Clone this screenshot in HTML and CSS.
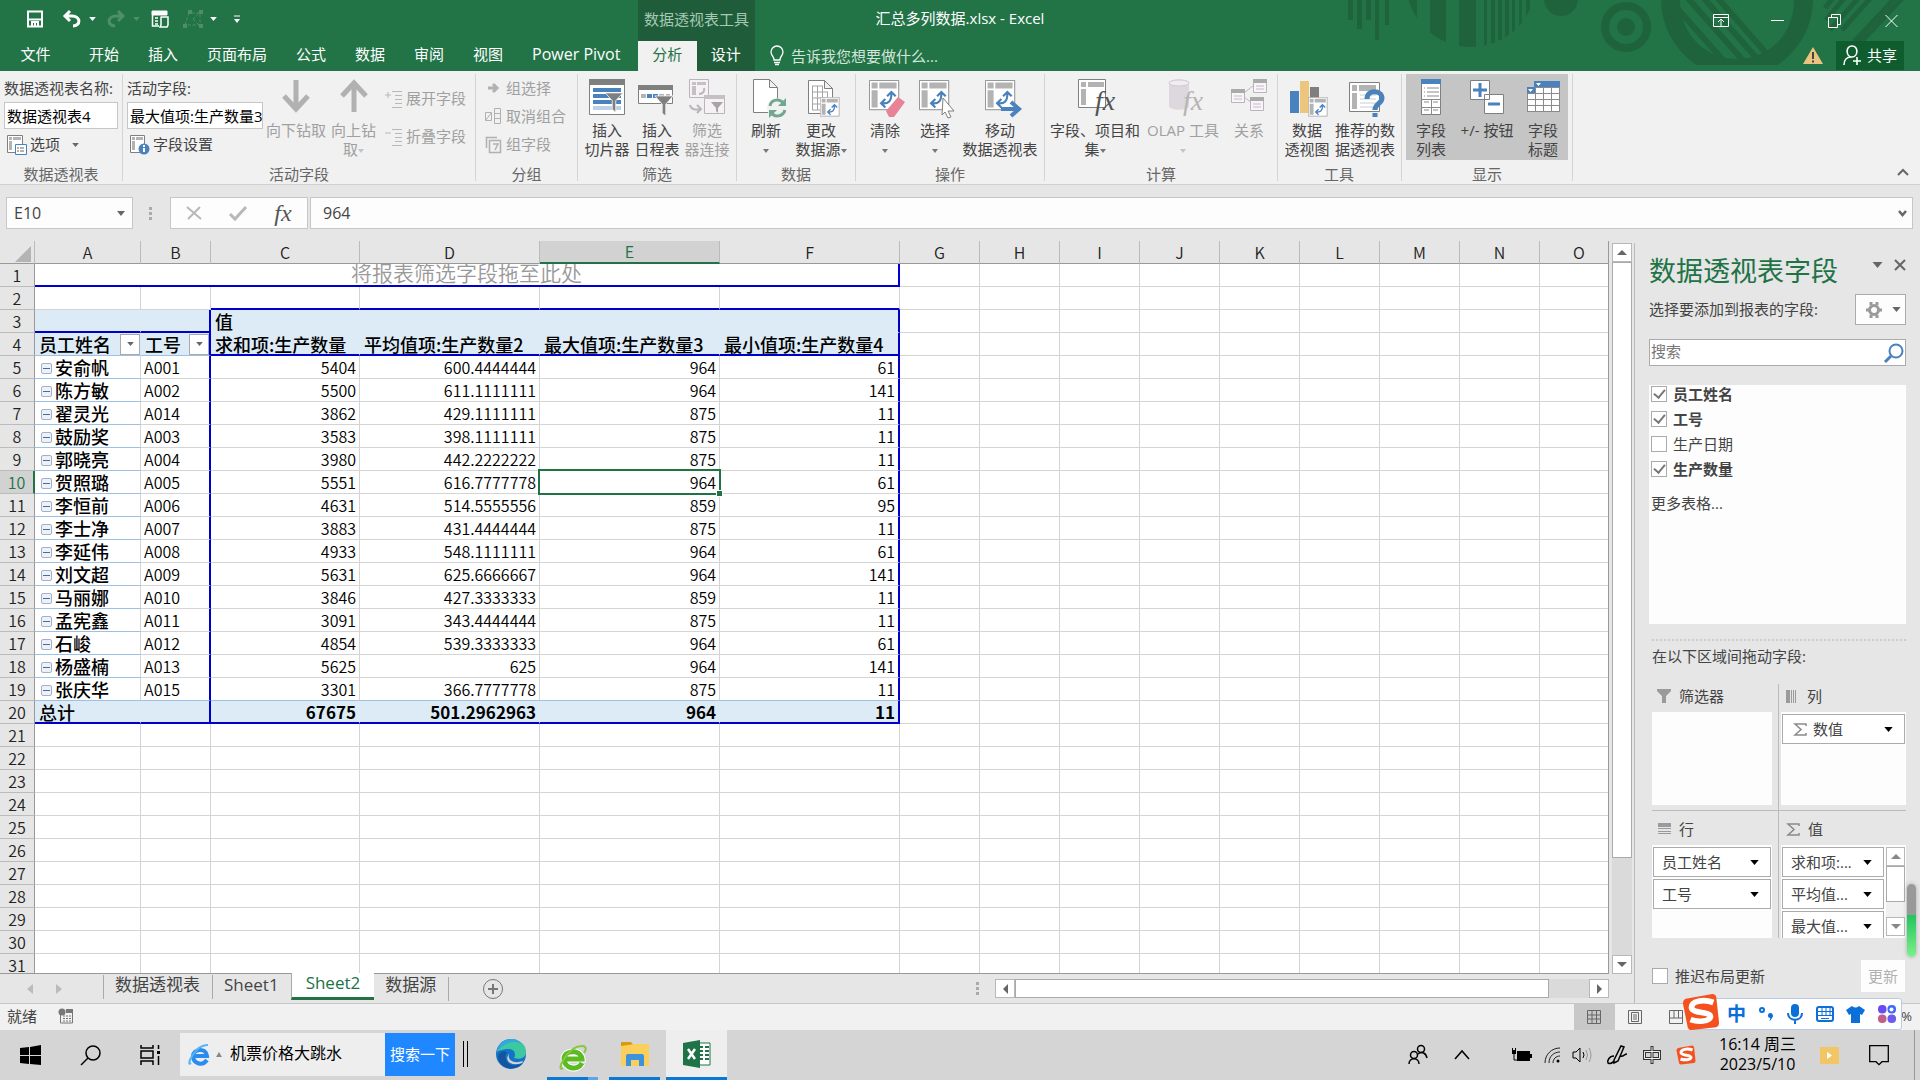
FILE: index.html
```html
<!DOCTYPE html>
<html lang="zh-CN">
<head>
<meta charset="utf-8">
<title>汇总多列数据.xlsx - Excel</title>
<link rel="stylesheet" href="styles.css">
</head>
<body>
<svg class="defs" aria-hidden="true">
  <symbol id="pivot" viewBox="0 0 36 36">
    <path d="M.5.5h34v34H.5z" fill="#fff" stroke="#7f7f7f"/>
    <path d="M3 3h7v7H3zM12 3h20v7H12zM3 12h7v20H3z" fill="#b3b3b3"/>
    <path d="M15 27c8 1 11-3 11-11M21 19l5-5 5 5M19 22l-5 5 5 5" fill="none" stroke="#4a82bd" stroke-width="2.500"/>
  </symbol>
  <symbol id="funnel" viewBox="0 0 22 24">
    <path d="M1 1h20l-8 9v13l-4-3V10z" fill="#7f7f7f" stroke="#f1f1f1"/>
  </symbol>
  <symbol id="tri-down" viewBox="0 0 10 6"><path d="M0 0h10L5 6z" fill="currentColor"/></symbol>
  <symbol id="sogou" viewBox="0 0 40 40">
    <path d="M4 6 32 1q3 0 4 3l3 27q0 4-3 5L10 39q-3 0-4-3L1 11q0-4 3-5z" fill="#f4511e"/>
    <path d="M33 10C22 6 10 9 10 15c0 7 20 4 20 10-1 5-13 6-21 3" fill="none" stroke="#fff" stroke-width="6"/>
  </symbol>
</svg>

<div class="app">
  <header class="top">
    <svg class="pattern" viewBox="0 0 590 71" width="590" height="71" aria-hidden="true">
      <defs>
        <clipPath id="c1"><circle cx="141" cy="-18" r="65"/></clipPath>
        <clipPath id="c2"><circle cx="407" cy="2" r="58"/></clipPath>
      </defs>
      <g fill="#1f633c">
        <path d="M18 0h5v20h-5zM27 0h5v29h-5zM36 0h5v20h-5zM45 0h4v40h-4zM55 0h4v25h-4z"/>
        <g clip-path="url(#c1)"><path d="M76 0h11v60H76zM100 0h16v60h-16zM129 0h17v60h-17zM154 0h3v60h-3zM161 0h4v60h-4zM168 0h4v60h-4zM175 0h4v60h-4zM182 0h3v60h-3zM189 0h3v60h-3zM196 0h4v60h-4z"/></g>
        <circle cx="231" cy="-1" r="17"/>
        <circle cx="296" cy="27" r="9"/>
      </g>
      <circle cx="296" cy="27" r="21" fill="none" stroke="#1f633c" stroke-width="8"/>
      <path d="M331 0q1 40 35 65h82q34-25 35-65h-19c0 35-26 59-57 59s-57-24-57-59z" fill="#1f633c"/>
      <g clip-path="url(#c2)" stroke="#1f633c" stroke-width="6">
        <path d="M340 0 400 68M356-4 416 64M370-6 430 62M384-6 444 62" />
      </g>
      <path d="m495 8 8-10m-7 22 20-24m-16 34 32-36m-20 36 32-36m-20 48 56-60m-66 78 66-70" stroke="#1f633c" stroke-width="5" fill="none"/>
    </svg>
    <div class="titlebar">
      <div class="title-left">
        <div class="qat">
          <button class="ib" aria-label="保存"><svg width="18" height="18" viewBox="0 0 18 18"><path d="M2 1.500h14v15H2zM2 9.500h14M6 16v-4h6v4M9 13v3" fill="none" stroke="#fff" stroke-width="2"/></svg></button>
          <button class="ib undo" aria-label="撤消"><svg width="18" height="18" viewBox="0 0 18 18"><path d="M7 1 2 6l5 5M2 6h7c9 0 9 10 1 10" fill="none" stroke="#fff" stroke-width="3"/></svg><svg class="car" width="7" height="4"><use href="#tri-down"/></svg></button>
          <button class="ib redo" aria-label="恢复"><svg width="18" height="18" viewBox="0 0 18 18"><path d="m11 1 5 5-5 5M16 6H9c-9 0-9 10-1 10" fill="none" stroke="#4f8f68" stroke-width="3"/></svg><svg class="car" width="7" height="4"><use href="#tri-down"/></svg></button>
          <button class="ib report" aria-label="数据透视表"><svg width="18" height="18" viewBox="0 0 18 18"><path d="M1 1h15v4H1z" fill="#fff" stroke="#fff"/><path d="M1.500 5v11H8M4 8h3M4 11h3M4 14h3M9.500 7H17v8l-1 2H9l1-2V7" fill="none" stroke="#fff" stroke-width="1.500"/></svg></button>
          <button class="ib shapes" aria-label="选择对象"><svg width="20" height="18" viewBox="0 0 20 18"><path d="M2 15 6 3h11v12zM10 9l5-5m-5 5 6 6" fill="none" stroke="#4f8f68" stroke-dasharray="3 2"/><path d="M0 14h4v4H0zM16 14h4v4h-4zM16 0h4v4h-4zM5 0h4v4H5z" fill="#4f8f68"/></svg><svg class="car" width="7" height="4"><use href="#tri-down"/></svg></button>
          <button class="ib more" aria-label="自定义"><svg width="8" height="9" viewBox="0 0 8 9"><path d="M1 1h6" stroke="#fff"/><path d="M1 4h6L4 8z" fill="#fff"/></svg></button>
        </div>
        <div class="context">数据透视表工具</div>
      </div>
      <h1>汇总多列数据.xlsx - Excel</h1>
      <div class="winbtns">
        <button aria-label="功能区显示选项"><svg width="16" height="14" viewBox="0 0 16 14"><path d="M.5.5h15v12H.5zM.5 3.500h15M8 12V6M5 8l3-3 3 3" fill="none" stroke="#fff"/></svg></button>
        <button aria-label="最小化"><svg width="13" height="14" viewBox="0 0 13 14"><path d="M0 6.500h13" stroke="#fff"/></svg></button>
        <button aria-label="还原"><svg width="13" height="14" viewBox="0 0 13 14"><path d="M.5 3.500h9v10h-9zM3.500 3V.5h9v10H10" fill="none" stroke="#fff"/></svg></button>
        <button aria-label="关闭"><svg width="13" height="14" viewBox="0 0 13 14"><path d="m.5 1 12 12m0-12-12 12" stroke="#fff"/></svg></button>
      </div>
    </div>
    <nav class="tabs">
      <button class="file">文件</button>
      <div class="tablist">
        <button>开始</button><button>插入</button><button>页面布局</button><button>公式</button><button>数据</button><button>审阅</button><button>视图</button><button class="latin">Power Pivot</button>
      </div>
      <div class="ctx-tabs"><button class="on">分析</button><button>设计</button></div>
      <button class="tell"><svg width="14" height="20" viewBox="0 0 14 20"><path d="M4 14C4 10 1 10 1 6a6 6 0 0 1 12 0c0 4-3 4-3 8zM4 16.500h6M5 18.500h4" fill="none" stroke="#fff" stroke-width="1.300"/></svg>告诉我您想要做什么...</button>
      <svg class="warn" width="20" height="18" viewBox="0 0 20 18"><path d="M10 0 20 17H0z" fill="#edc380"/><path d="M10 5v7M10 13.500v2" stroke="#444" stroke-width="2"/></svg>
      <button class="share"><svg width="20" height="21" viewBox="0 0 20 21"><path d="M1 20c0-5 3-8 7-8M9 1c7 0 6 11 0 11S2 1 9 1M14 12v8M10 16h8" fill="none" stroke="#fff" stroke-width="1.600"/></svg>共享</button>
    </nav>
  </header>

  <section class="ribbon">
    <div class="group g-name">
      <div class="body col">
        <label for="pt-name">数据透视表名称:</label>
        <input id="pt-name" type="text" value="数据透视表4">
        <button class="row-btn"><svg width="20" height="20" viewBox="0 0 20 20"><path d="M.5.500h15v17H.5z" fill="#fff" stroke="#7f7f7f"/><path d="M2 2h3v3H2zM6 2h8v3H6zM2 6h3v9H2z" fill="#b3b3b3"/><path d="M8.500 9.500h11v10h-11z" fill="#fff" stroke="#4a82bd"/><path d="M10 13h2m1 0h4m-7 3h2m1 0h4" stroke="#666"/></svg>选项<svg class="car" width="7" height="4"><use href="#tri-down"/></svg></button>
      </div>
      <div class="caption">数据透视表</div>
    </div>
    <div class="group g-field">
      <div class="body">
        <div class="col">
          <label for="act-field">活动字段:</label>
          <input id="act-field" type="text" value="最大值项:生产数量3">
          <button class="row-btn"><svg width="20" height="20" viewBox="0 0 20 20"><path d="M.5.500h14v17H.5z" fill="#fff" stroke="#7f7f7f"/><path d="M2 2h3v3H2zM6 2h7v3H6zM2 6h3v9H2z" fill="#b3b3b3"/><circle cx="14" cy="14" r="5.500" fill="#4a82bd"/><path d="M14 13v4M14 10v2" stroke="#fff" stroke-width="2"/></svg>字段设置</button>
        </div>
        <button class="big dis w60 drill"><svg width="28" height="34" viewBox="0 0 28 34"><path d="M14 1v30M2 17l12 13 12-13" fill="none" stroke="#b1b1b1" stroke-width="5"/></svg><span>向下钻取</span></button>
        <button class="big dis w55"><svg width="28" height="34" viewBox="0 0 28 34"><path d="M14 33V4M2 17 14 4l12 13" fill="none" stroke="#b1b1b1" stroke-width="5"/></svg><span>向上钻<br>取<i class="dd"></i></span></button>
        <div class="col two">
          <button class="row-btn dis"><svg width="18" height="18" viewBox="0 0 18 18"><path d="M0 5h6M3 2v6M7 1.500h10M10 5.500h7M10 9.500h7M10 13.500h7M7 17.500h10" stroke="#b8b8b8"/></svg>展开字段</button>
          <button class="row-btn dis"><svg width="18" height="18" viewBox="0 0 18 18"><path d="M0 5h6M7 1.500h10M10 5.500h7M10 9.500h7M10 13.500h7M7 17.500h10" stroke="#b8b8b8"/></svg>折叠字段</button>
        </div>
      </div>
      <div class="caption">活动字段</div>
    </div>
    <div class="group g-grp">
      <div class="body col">
        <button class="row-btn dis"><svg width="17" height="17" viewBox="0 0 17 17"><path d="M3 8h9M8 4l4 4-4 4" fill="none" stroke="#b1b1b1" stroke-width="3"/></svg>组选择</button>
        <button class="row-btn dis"><svg width="17" height="17" viewBox="0 0 17 17"><path d="M.500 4.500h6v8h-6zM.500 12.500 6.500 4.500M9.500.500h6v15h-6zM9.500 5.500h6M9.500 10.500h6" fill="none" stroke="#b1b1b1"/></svg>取消组合</button>
        <button class="row-btn dis"><svg width="17" height="17" viewBox="0 0 17 17"><path d="M1.500 12V1.500H12M4.500 4.500h11v12h-11zM8 8h5l-3 6" fill="none" stroke="#b1b1b1" stroke-width="1.500"/></svg>组字段</button>
      </div>
      <div class="caption">分组</div>
    </div>
    <div class="group">
      <div class="body">
        <button class="big w50"><svg width="36" height="36" viewBox="0 0 36 36"><path d="M.500.500h35v35H.500z" fill="#fff" stroke="#7f7f7f"/><path d="M0 0h36v6H0z" fill="#7f7f7f"/><path d="M4 9h28v4H4zM4 15h28v4H4zM4 21h28v4H4z" fill="#4a82bd"/><path d="M4 27h28v4H4z" fill="#bdd0e6"/><use href="#funnel" x="14" y="13" width="22" height="21"/></svg><span>插入<br>切片器</span></button>
        <button class="big w50"><svg width="38" height="36" viewBox="0 0 38 36"><path d="M.500 6.500h34v18H.500z" fill="#fff" stroke="#7f7f7f"/><path d="M0 6h35v5H0z" fill="#7f7f7f"/><path d="M3 15h5v4H3zM21 15h5v4h-5zM28 15h4v4h-4z" fill="#b3b3b3"/><path d="M9 15h5v4H9zM15 15h5v4h-5z" fill="#4a82bd"/><use href="#funnel" x="14" y="16" width="24" height="22"/></svg><span>插入<br>日程表</span></button>
        <button class="big w50 dis"><svg width="36" height="36" viewBox="0 0 36 36"><g fill="#f4f2f4" stroke="#bbb5bb"><path d="M.500.500h19v18H.500zM15.500 16.500h20v18h-20z"/></g><path d="M3 3h4v3H3zM8 3h9v3H8zM3 7h4v9H3zM15 16h21v4H15z" fill="#c4c0c4"/><path d="M10 15c4 0 6-3 5-6M1 26c1 5 6 5 10 4M8 26l4 4-4 4" fill="none" stroke="#bbb5bb" stroke-width="2"/><path d="M22 23h12l-5 6v5l-2-2v-3z" fill="#a5a5a5"/></svg><span>筛选<br>器连接</span></button>
      </div>
      <div class="caption">筛选</div>
    </div>
    <div class="group">
      <div class="body">
        <button class="big w50"><svg width="26" height="38" viewBox="0 0 26 38"><path d="M.500.500h16l8 8v25h-24zM16.500.500v8h8" fill="#fff" stroke="#7f7f7f"/><circle cx="24" cy="29" r="10" fill="#f1f1f1"/><g fill="none" stroke="#70a892" stroke-width="3"><path d="M17 27c1-7 10-8 14-2M32 31c-2 7-11 8-14 2"/></g><path d="M33 19v8h-8zM16 39v-8h8z" fill="#70a892"/></svg><span>刷新<br><i class="dd"></i></span></button>
        <button class="big w60"><svg width="26" height="38" viewBox="0 0 26 38"><path d="M.500 1.500h16l8 8v25H.500zM16.500 1.500v8h8" fill="#fff" stroke="#7f7f7f"/><path d="M4 7h11M4 13h16M4 19h16M4 25h16M4 31h16M4.500 7v24M9.500 7v24M14.500 7v24M19.500 13v18" stroke="#a5a5a5"/><use href="#pivot" x="12" y="18" width="20" height="20"/></svg><span>更改<br>数据源<i class="dd"></i></span></button>
      </div>
      <div class="caption">数据</div>
    </div>
    <div class="group">
      <div class="body">
        <button class="big w50"><svg width="32" height="38" viewBox="0 0 32 38"><use href="#pivot" x="0" y="1" width="31" height="31"/><path d="m17 32 12-14 7 5-11 15h-5z" fill="#e68397"/></svg><span>清除<br><i class="dd"></i></span></button>
        <button class="big w50"><svg width="32" height="38" viewBox="0 0 32 38"><use href="#pivot" x="0" y="1" width="31" height="31"/><path d="m24 19 11 13h-6l3 6-3 1-3-6-3 3z" fill="#fff" stroke="#7f7f7f"/></svg><span>选择<br><i class="dd"></i></span></button>
        <button class="big w80"><svg width="30" height="38" viewBox="0 0 30 38"><use href="#pivot" x="0" y="1" width="31" height="31"/><path d="M16 30h17M26 23l8 7-8 7" fill="none" stroke="#4a82bd" stroke-width="4"/></svg><span>移动<br>数据透视表</span></button>
      </div>
      <div class="caption">操作</div>
    </div>
    <div class="group">
      <div class="body">
        <button class="big w92"><svg width="34" height="38" viewBox="0 0 34 38"><path d="M.500.500h27v28H.500z" fill="#fff" stroke="#7f7f7f"/><path d="M3 3h5v5H3zM10 3h16v5H10zM3 10h5v16H3z" fill="#b3b3b3"/><text x="17" y="31" class="fx-text">fx</text></svg><span>字段、项目和<br>集<i class="dd"></i></span></button>
        <button class="big w84 dis"><svg width="30" height="38" viewBox="0 0 30 38"><path d="M1 4v23c0 5 20 5 20 0V4c0-5-20-5-20 0" fill="#ddd8de"/><ellipse cx="11" cy="4" rx="10" ry="3" fill="#efedef" stroke="#d0ccd0"/><text x="15" y="31" class="fx-text pale">fx</text></svg><span>OLAP 工具<br><i class="dd"></i></span></button>
        <button class="big w48 dis"><svg width="36" height="36" viewBox="0 0 36 36"><path d="M13 14 23 6M13 18l8 6" stroke="#bbb"/><g fill="#f8f5f8" stroke="#bbb5bb"><path d="M.500 10.500h13v13H.500zM22.500.500h13v13h-13zM19.500 18.500h13v13h-13z"/></g><path d="M0 10h14v4H0zM22 0h14v4H22zM19 18h14v4H19z" fill="#aaa"/><path d="M3 17h8M3 20h8M25 7h8M25 10h8M22 25h8M22 28h8" stroke="#cbb8cf"/></svg><span>关系</span></button>
      </div>
      <div class="caption">计算</div>
    </div>
    <div class="group g-tool">
      <div class="body">
        <button class="big w52"><svg width="34" height="38" viewBox="0 0 34 38"><path d="M0 12h9v22H0z" fill="#4a82bd"/><path d="M10 2h9v32h-9z" fill="#ecc67d"/><path d="M20 8h9v12h-9z" fill="#7f7f7f"/><use href="#pivot" x="18" y="18" width="20" height="20"/></svg><span>数据<br>透视图</span></button>
        <button class="big w64"><svg width="32" height="38" viewBox="0 0 32 38"><path d="M.500 3.500h30v29H.500z" fill="#fff" stroke="#7f7f7f"/><path d="M3 6h5v6H3zM10 6h17v6H10zM3 14h5v16H3z" fill="#b3b3b3"/><path d="M11 16h16M11 20h16M11 24h16M11 28h16" stroke="#ccc"/><path d="M18 20c0-10 15-9 15-1 0 6-7 5-7 12M26 34v4" fill="none" stroke="#4a82bd" stroke-width="5"/></svg><span>推荐的数<br>据透视表</span></button>
      </div>
      <div class="caption">工具</div>
    </div>
    <div class="group">
      <div class="body pressed">
        <button class="big w50"><svg width="20" height="36" viewBox="0 0 20 36"><path d="M.500.500h19v35H.500z" fill="#fff" stroke="#7f7f7f"/><path d="M0 0h20v5H0z" fill="#4a82bd"/><path d="M3 9h1m2 0h12M3 13h1m2 0h12M3 17h1m2 0h12M0 20.500h20M0 28.500h20M10.500 20v16M3 23h5m4 0h5M3 31h5m4 0h5" stroke="#8a8a8a"/></svg><span>字段<br>列表</span></button>
        <button class="big w62"><svg width="36" height="36" viewBox="0 0 36 36"><path d="M1.500 1.500h19v19h-19zM15.500 15.500h19v19h-19z" fill="#fff" stroke="#7f7f7f"/><path d="M4 11h14M11 4v14M19 25h12" stroke="#4a82bd" stroke-width="3"/></svg><span>+/- 按钮</span></button>
        <button class="big w50"><svg width="34" height="36" viewBox="0 0 34 36"><path d="M8 2h26v31H1V8h7z" fill="#8a8a8a"/><path d="M8 2h26v6H8zM1 8h8v6H1z" fill="#4a82bd"/><path d="M10 9h7v5h-7zM18 9h7v5h-7zM26 9h7v5h-7zM2 15h7v5H2zM10 15h7v5h-7zM18 15h7v5h-7zM26 15h7v5h-7zM2 21h7v5H2zM10 21h7v5h-7zM18 21h7v5h-7zM26 21h7v5h-7zM2 27h7v5H2zM10 27h7v5h-7zM18 27h7v5h-7zM26 27h7v5h-7zM10 4h5l-2.500 3zM2 10h5l-2.500 3z" fill="#fff"/></svg><span>字段<br>标题</span></button>
      </div>
      <div class="caption">显示</div>
    </div>
    <button class="collapse" aria-label="折叠功能区"><svg width="12" height="8" viewBox="0 0 12 8"><path d="m1 7 5-5 5 5" fill="none" stroke="#666" stroke-width="2"/></svg></button>
  </section>

  <section class="formula">
    <div class="namebox"><input type="text" value="E10" aria-label="名称框"><svg width="8" height="5"><use href="#tri-down"/></svg></div>
    <span class="grip"></span>
    <div class="fbtns">
      <button aria-label="取消"><svg width="16" height="14" viewBox="0 0 16 14"><path d="m1 1 14 12M14 1 2 13" stroke="#b8b8b8" stroke-width="2"/></svg></button>
      <button aria-label="输入"><svg width="18" height="14" viewBox="0 0 18 14"><path d="m1 8 5 5L17 1" fill="none" stroke="#b8b8b8" stroke-width="3"/></svg></button>
      <button class="fx" aria-label="插入函数">fx</button>
    </div>
    <div class="fbox"><input type="text" value="964" aria-label="编辑栏"><svg width="9" height="7" viewBox="0 0 9 7"><path d="m1 1 3.500 4L8 1" fill="none" stroke="#666" stroke-width="2.500"/></svg></div>
  </section>

  <main class="work">
    <div class="book">
      <div class="sheet-row">
        <div class="sheet"><table class="grid" id="grid"></table></div>
        <div class="vscroll">
          <button aria-label="向上滚动"><svg width="10" height="5" viewBox="0 0 10 5"><path d="M0 5h10L5 0z" fill="#666"/></svg></button>
          <div class="track"><div class="thumb"></div></div>
          <button aria-label="向下滚动"><svg width="10" height="5" viewBox="0 0 10 5"><path d="M0 0h10L5 5z" fill="#666"/></svg></button>
        </div>
      </div>
      <div class="sheetbar">
        <div class="nav"><svg width="6" height="10" viewBox="0 0 6 10"><path d="M6 0v10L0 5z" fill="#bbb"/></svg><svg width="6" height="10" viewBox="0 0 6 10"><path d="M0 0v10l6-5z" fill="#bbb"/></svg></div>
        <button class="st">数据透视表</button>
        <button class="st">Sheet1</button>
        <button class="st on">Sheet2</button>
        <button class="st">数据源</button>
        <button class="add" aria-label="新工作表"><svg width="22" height="22" viewBox="0 0 22 22"><circle cx="11" cy="11" r="9.500" fill="none" stroke="#777"/><path d="M11 6v10M6 11h10" stroke="#777" stroke-width="2"/></svg></button>
        <div class="hscroll">
          <span class="grip"></span>
          <button aria-label="向左滚动"><svg width="5" height="10" viewBox="0 0 5 10"><path d="M5 0v10L0 5z" fill="#666"/></svg></button>
          <div class="track"><div class="thumb"></div></div>
          <button aria-label="向右滚动"><svg width="5" height="10" viewBox="0 0 5 10"><path d="M0 0v10l5-5z" fill="#666"/></svg></button>
        </div>
      </div>
    </div>

    <aside class="pane">
      <div class="pane-head">
        <h2>数据透视表字段</h2>
        <button aria-label="任务窗格选项"><svg width="11" height="6"><use href="#tri-down"/></svg></button>
        <button aria-label="关闭窗格"><svg width="12" height="12" viewBox="0 0 12 12"><path d="m1 1 10 10M11 1 1 11" stroke="#666" stroke-width="2"/></svg></button>
      </div>
      <div class="pane-sub">
        <span>选择要添加到报表的字段:</span>
        <button class="gear" aria-label="工具"><svg width="16" height="16" viewBox="0 0 16 16"><circle cx="8" cy="8" r="4.500" fill="none" stroke="#9a9a9a" stroke-width="3"/><path d="M5 0v3M11 0v3M5 13v3M11 13v3M0 8h3M13 8h3" stroke="#9a9a9a" stroke-width="3"/></svg><svg width="9" height="5"><use href="#tri-down"/></svg></button>
      </div>
      <div class="search"><input type="text" placeholder="搜索" aria-label="搜索字段"><svg width="20" height="20" viewBox="0 0 20 20"><circle cx="12" cy="8" r="6.500" fill="none" stroke="#4a82bd" stroke-width="2"/><path d="m7 13-6 6" stroke="#4a82bd" stroke-width="3"/></svg></div>
      <div class="fields">
        <label class="b"><input type="checkbox" checked>员工姓名</label>
        <label class="b"><input type="checkbox" checked>工号</label>
        <label><input type="checkbox">生产日期</label>
        <label class="b"><input type="checkbox" checked>生产数量</label>
        <a href="#">更多表格...</a>
      </div>
      <div class="areas-title">在以下区域间拖动字段:</div>
      <div class="areas">
        <div class="area">
          <h3><svg width="14" height="14" viewBox="0 0 14 14"><path d="M0 0h14v2L9 7v7H5V7L0 2z" fill="#9a9a9a"/></svg>筛选器</h3>
          <div class="drop"></div>
        </div>
        <div class="area right">
          <h3><svg width="13" height="13" viewBox="0 0 13 13"><path d="M0 0h4v13H0zM5 0h1v13H5zM7 0h1v13H7zM9 0h1v13H9z" fill="#9a9a9a"/></svg>列</h3>
          <div class="drop"><button class="pill"><span><svg class="sig" width="13" height="13" viewBox="0 0 13 13"><path d="M12 3V1H1l6 5.500L1 12h11v-2" fill="none" stroke="#8a8a8a" stroke-width="1.500"/></svg>数值</span><svg width="9" height="5"><use href="#tri-down"/></svg></button></div>
        </div>
        <div class="area low">
          <h3><svg width="13" height="12" viewBox="0 0 13 12"><path d="M0 0h13v4H0zM0 5h13v1H0zM0 8h13v1H0zM0 10h13v1H0z" fill="#9a9a9a"/></svg>行</h3>
          <div class="drop">
            <button class="pill"><span>员工姓名</span><svg width="9" height="5"><use href="#tri-down"/></svg></button>
            <button class="pill"><span>工号</span><svg width="9" height="5"><use href="#tri-down"/></svg></button>
          </div>
        </div>
        <div class="area right low">
          <h3><svg width="13" height="13" viewBox="0 0 13 13"><path d="M12 3V1H1l6 5.500L1 12h11v-2" fill="none" stroke="#8a8a8a" stroke-width="1.500"/></svg>值</h3>
          <div class="drop split">
            <div class="pills">
              <button class="pill"><span>求和项:...</span><svg width="9" height="5"><use href="#tri-down"/></svg></button>
              <button class="pill"><span>平均值...</span><svg width="9" height="5"><use href="#tri-down"/></svg></button>
              <button class="pill"><span>最大值...</span><svg width="9" height="5"><use href="#tri-down"/></svg></button>
            </div>
            <div class="vscroll mini">
              <button aria-label="上移"><svg width="10" height="5" viewBox="0 0 10 5"><path d="M0 5h10L5 0z" fill="#888"/></svg></button>
              <div class="track"><div class="thumb"></div></div>
              <button aria-label="下移"><svg width="10" height="5" viewBox="0 0 10 5"><path d="M0 0h10L5 5z" fill="#888"/></svg></button>
            </div>
          </div>
        </div>
      </div>
      <div class="defer"><label><input type="checkbox">推迟布局更新</label><button disabled>更新</button></div>
      <div class="meter"></div>
    </aside>
  </main>

  <footer class="status">
    <span>就绪</span>
    <svg width="16" height="16" viewBox="0 0 16 16"><path d="M2.500 5v10h12V4" fill="none" stroke="#777"/><path d="M8 1h7v4H8z" fill="#777"/><circle cx="4" cy="4" r="3.500" fill="#777"/><path d="M5 8h8M5 10.500h8M5 13h8" stroke="#777" stroke-dasharray="2 1"/></svg>
    <div class="views">
      <button class="on" aria-label="普通"><svg width="15" height="14" viewBox="0 0 15 14"><path d="M.500.500h13v13H.500zM5 0v14M9.500 0v14M0 5h14M0 9h14" fill="none" stroke="#666"/></svg></button>
      <button aria-label="页面布局"><svg width="15" height="14" viewBox="0 0 15 14"><path d="M.500.500h13v13H.500zM3.500 2.500h7v9h-7zM5 5h4M5 7h4M5 9h4" fill="none" stroke="#666"/></svg></button>
      <button aria-label="分页预览"><svg width="15" height="14" viewBox="0 0 15 14"><path d="M.500.500h13v13H.500zM5 0v8h9M9.500 0v8M0 8h5" fill="none" stroke="#666"/></svg></button>
    </div>
    <span class="pct">%</span>
    <div class="ime">
      <svg class="ime-logo" width="40" height="38"><use href="#sogou"/></svg>
      <b>中</b>
      <svg width="16" height="20" viewBox="0 0 16 20"><circle cx="3" cy="6" r="2" fill="none" stroke="#0a6fd8" stroke-width="2"/><path d="M12 9a3 3 0 0 1 1 5q-1 3-3 3 2-2 1-3a2.500 2.500 0 0 1 1-5" fill="#0a6fd8"/></svg>
      <svg width="16" height="20" viewBox="0 0 16 20"><rect x="4" width="8" height="13" rx="4" fill="#0a6fd8"/><path d="M1 9c0 9 14 9 14 0M8 15v5" fill="none" stroke="#0a6fd8" stroke-width="2"/></svg>
      <svg width="18" height="16" viewBox="0 0 18 16"><rect x="1" y="1" width="16" height="14" rx="2" fill="none" stroke="#0a6fd8" stroke-width="2"/><path d="M2 5.500h14M2 9.500h14M6 2v8M10 2v8M14 2v8M5 12.500h8" stroke="#0a6fd8"/></svg>
      <svg width="19" height="18" viewBox="0 0 19 18"><path d="M6 1q3.500 3 7 0l6 4-3 5-2-1v9H5V9l-2 1-3-5z" fill="#0a6fd8"/></svg>
      <svg width="18" height="18" viewBox="0 0 18 18"><rect width="8.500" height="8.500" rx="4" fill="#6a4cf0"/><rect x="9.500" width="8.500" height="8.500" rx="4" fill="#3d6bf5"/><rect y="9.500" width="8.500" height="8.500" rx="4" fill="#c0608a"/><rect x="9.500" y="9.500" width="8.500" height="8.500" rx="4" fill="#6a5cf0"/><circle cx="13.500" cy="4.500" r="2" fill="#fff"/></svg>
    </div>
  </footer>

  <div class="taskbar">
    <button class="tk" aria-label="开始"><svg width="21" height="20" viewBox="0 0 21 20"><path d="m0 3 9-1v8H0zM10 2l11-2v10H10zM0 11h9v8l-9-1zM10 11h11v9l-11-1z"/></svg></button>
    <button class="tk" aria-label="搜索"><svg width="21" height="21" viewBox="0 0 21 21"><circle cx="13" cy="8" r="7" fill="none" stroke="#000" stroke-width="1.500"/><path d="m8 13-7 7" stroke="#000" stroke-width="1.500"/></svg></button>
    <button class="tk" aria-label="任务视图"><svg width="21" height="20" viewBox="0 0 21 20"><path d="M1 0v3h12V0M1 6h12v7H1zM1 20v-4h12v4M18.500 0v4M18.500 11v9" fill="none" stroke="#000" stroke-width="1.500"/><path d="M17 6h3v3h-3z"/></svg></button>
    <div class="tsearch">
      <svg width="24" height="24" viewBox="0 0 24 24"><path d="M19 17c-5 7-14 3-14-4S18 4 19 13H6" fill="none" stroke="#2b8cf0" stroke-width="4"/><path d="M3 20C-3 25 7 1 20 2" fill="none" stroke="#57b3f7" stroke-width="2"/></svg>
      <svg width="6" height="5" viewBox="0 0 6 5"><path d="M0 5h6L3 0z" fill="#888"/></svg>
      <input type="text" value="机票价格大跳水" aria-label="网页搜索">
      <button>搜索一下</button>
    </div>
    <span class="bars"></span>
    <button class="app-btn" aria-label="Edge"><svg width="32" height="32" viewBox="0 0 32 32"><circle cx="16" cy="16" r="15" fill="#1473c8"/><path d="M2 14C4-3 31-2 31 14c0 6-6 8-12 6 3-5-1-9-5-9-6 0-11 2-12 3" fill="#3cc8a0"/><path d="M2 14C4-1 22-2 26 6c-9-5-18 0-24 8" fill="#33a7e0"/><path d="M12 14c-5 8 3 18 16 11-5 8-24 8-25-6 0-4 5-7 9-5" fill="#1555a0"/><path d="M14 16c-2 7 6 10 14 7l-1 2c-12 4-18-3-13-9" fill="#d4d4d4"/></svg></button>
    <button class="app-btn run two" aria-label="浏览器"><svg width="30" height="30" viewBox="0 0 30 30"><path d="M24 20c-5 9-18 5-18-4S23 6 24 16H8" fill="none" stroke="#fff" stroke-width="7"/><path d="M24 20c-5 9-18 5-18-4S23 6 24 16H8" fill="none" stroke="#5cba22" stroke-width="5"/><path d="M5 25C-3 31 9 2 25 3c4 1 3 4 1 7" fill="none" stroke="#86c840" stroke-width="2"/></svg></button>
    <button class="app-btn run" aria-label="文件资源管理器"><svg width="28" height="26" viewBox="0 0 28 26"><path d="M0 1h10l3 4H0z" fill="#d99a0b"/><path d="M0 5 14 3h14v22H0z" fill="#fbcf5c"/><path d="M5 25V15q0-2 2-2h14q2 0 2 2v10h-5v-6h-8v6z" fill="#3a93dc"/></svg></button>
    <button class="app-btn run active" aria-label="Excel"><svg width="28" height="28" viewBox="0 0 28 28"><path d="M14 3h13v22H14z" fill="#fff" stroke="#207346"/><path d="M17 7h3m2 0h4M17 11h3m2 0h4M17 15h3m2 0h4M17 19h3m2 0h4" stroke="#207346" stroke-width="2"/><path d="m0 3 17-3v28L0 25z" fill="#207346"/><path d="m5 9 7 10M12 9 5 19" stroke="#fff" stroke-width="2.500"/></svg></button>
    <div class="tray">
      <svg width="20" height="20" viewBox="0 0 20 20"><g fill="none" stroke="#000" stroke-width="1.500"><circle cx="13" cy="4" r="3.500"/><circle cx="6" cy="10" r="3.500"/><path d="M1 19c0-7 10-7 10 0M10 9c4-3 8-1 9 4"/></g></svg>
      <svg width="16" height="10" viewBox="0 0 16 10"><path d="m1 9 7-8 7 8" fill="none" stroke="#000" stroke-width="1.500"/></svg>
      <svg width="20" height="14" viewBox="0 0 20 14"><path d="M5 3h13v10H5zM18 6h2v4h-2zM0 2h4v4H0z"/><path d="M.500 0v3M3.500 0v3M2 5v7h4" fill="none" stroke="#000"/></svg>
      <svg width="17" height="17" viewBox="0 0 17 17"><g fill="none" stroke="#222"><path d="M1 16C1 7 8 1 16 1M5 16C5 9 10 5 16 5M9 16c0-4 3-7 7-7"/></g><circle cx="14" cy="14" r="1.500"/></svg>
      <svg width="20" height="16" viewBox="0 0 20 16"><path d="M1 5h3l4-4v14l-4-4H1z" fill="none" stroke="#000"/><path d="M11 5q2 3 0 6" fill="none" stroke="#000"/><path d="M14 3q3 5 0 10M17 1q4 7 0 14" fill="none" stroke="#999"/></svg>
      <svg width="21" height="20" viewBox="0 0 21 20"><path d="M7 15 14 1l3 1-6 14-4 2zM7 11c-5 0-7 5-6 7 4 2 7-3 6-4M13 11c4 1 4-2 7-2" fill="none" stroke="#000" stroke-width="1.500"/></svg>
      <svg width="18" height="18" viewBox="0 0 18 18"><path d="M1.500 5.500h15v7h-15zM9 0v18" fill="none" stroke="#333" stroke-width="3"/><path d="M1.500 5.500h15v7h-15zM9 1v16" fill="none" stroke="#eee"/></svg>
      <svg width="20" height="20"><use href="#sogou"/></svg>
      <div class="clock">16:14 周三<br>2023/5/10</div>
      <svg class="play" width="19" height="17" viewBox="0 0 19 17"><path d="M0 0h19v17H0z" fill="#f2c664"/><path d="m7 5 5 3.500L7 12z" fill="#fff"/></svg>
      <svg width="20" height="20" viewBox="0 0 20 20"><path d="M.700.700h18.600v16H13l-3 3-3-3H.700z" fill="none" stroke="#000" stroke-width="1.300"/></svg>
    </div>
  </div>
</div>
<script src="grid.js"></script>
</body>
</html>
```
FILE: styles.css
```css
* { box-sizing: border-box; }
body {
  margin: 0;
  font: 15px/19px "Open Sans", "Noto Sans CJK SC", sans-serif;
  color: #444;
  background: #e6e6e6;
}
button, input { font: inherit; color: inherit; }
button { border: 0; background: none; padding: 0; }
input { border: 0; padding: 0; min-width: 0; outline: 0; background: none; }
h1, h2, h3 { margin: 0; font-weight: 400; }
svg { display: block; flex: none; overflow: visible; }
.defs { position: absolute; width: 0; height: 0; }
.app { display: flex; flex-direction: column; height: 100vh; overflow: hidden; }

/* title bar and tabs */
.top { position: relative; background: #227447; color: #fff; flex: none; }
.pattern { position: absolute; right: 0; top: 0; overflow: hidden; }
.titlebar { position: relative; display: grid; grid-template-columns: 1fr auto 1fr; height: 41px; }
.title-left { display: flex; }
.qat { display: flex; align-items: center; width: 638px; padding: 0 0 3px 26px; }
.ib { display: flex; align-items: center; gap: 8px; }
.ib .car { color: #fff; }
.undo { margin-left: 19px; }
.redo { margin-left: 11px; }
.redo .car { color: #4f8f68; }
.report { margin-left: 11px; }
.shapes { margin-left: 14px; gap: 7px; }
.more { margin-left: 16px; }
.context { width: 117px; background: #1e5c3a; color: #a6c9b4; text-align: center; line-height: 38px; }
h1 { font-size: 15px; line-height: 37px; }
.winbtns { display: flex; justify-content: flex-end; align-items: center; }
.winbtns button { width: 57px; height: 38px; display: grid; place-items: center; }
.tabs { position: relative; display: flex; height: 30px; }
.tabs button { height: 30px; line-height: 19px; padding: 0 15px 4px 14px; white-space: nowrap; }
.tabs .file { width: 75px; padding: 0 4px 4px 0; }
.tabs .latin { font-size: 16px; }
.tablist { width: 563px; display: flex; }
.ctx-tabs { display: flex; width: 117px; background: #1e5c3a; }
.ctx-tabs button { flex: 1; padding: 0 0 4px; }
.ctx-tabs .on { background: #f1f1f1; color: #217346; }
.tabs .tell { display: flex; align-items: center; gap: 7px; padding: 0 15px; color: #d3e5da; }
.warn { margin: 6px 13px 0 auto; }
.tabs .share { display: flex; align-items: center; gap: 4px; padding: 0 7px; margin-right: 16px; height: 29px; background: #0f5c2f; }

/* ribbon */
.ribbon { display: flex; height: 114px; flex: none; padding: 3px 0; background: #f1f1f1; border-bottom: 1px solid #d0d0d0; }
.group { display: flex; flex-direction: column; border-right: 1px solid #d4d4d4; padding: 0 4px; flex: none; }
.body { display: flex; height: 88px; }
.caption { text-align: center; color: #666; line-height: 24px; height: 19px; }
.col { display: flex; flex-direction: column; align-items: flex-start; }
.g-name { width: 123px; }
.g-field { width: 353px; }
.g-grp { width: 102px; }
.g-grp .body { height: 84px; margin-bottom: 4px; padding: 0 5px; justify-content: space-between; }
.g-tool { padding: 0 4px 0 3px; }
.ribbon label { line-height: 28px; white-space: nowrap; }
.ribbon input { height: 27px; border: 1px solid #c6c6c6; background: #fff; color: #000; padding: 0 0 0 2px; }
#pt-name { width: 114px; }
#act-field { width: 136px; }
.row-btn { display: flex; align-items: center; gap: 3px; height: 28px; padding: 3px 0 0 3px; white-space: nowrap; }
.row-btn .car { margin-left: 9px; color: #666; }
.g-grp .row-btn { gap: 4px; padding: 0; }
.two { padding: 9px 0 0 1px; gap: 10px; }
.dis { color: #a0a0a0; }
.big { display: flex; flex-direction: column; align-items: center; padding-top: 5px; white-space: nowrap; flex: none; }
.big > svg { margin-bottom: auto; }
.big > span { height: 41px; display: block; }
.drill { margin-left: 3px; }
.dd { display: inline-block; margin-left: 4px; vertical-align: middle; border: 3px solid transparent; border-top: 4px solid #777; border-bottom: 0; }
br + .dd { margin-left: 0; }
.dis .dd { border-top-color: #c4c4c4; }
.w48 { width: 48px; } .w50 { width: 50px; } .w52 { width: 52px; } .w55 { width: 55px; } .w60 { width: 60px; }
.w62 { width: 62px; } .w64 { width: 64px; } .w80 { width: 80px; } .w84 { width: 84px; } .w92 { width: 92px; }
.pressed { background: #c5c5c5; height: 86px; margin-bottom: 2px; }
.pressed .big > span { height: 39px; }
.fx-text { font: italic 28px "Liberation Serif", serif; fill: #555; }
.fx-text.pale { fill: #b5b5b5; }
.collapse { margin: auto 11px 5px auto; }

/* formula bar */
.formula { display: flex; flex: none; padding: 12px 7px 11px 6px; height: 56px; }
.namebox, .fbtns, .fbox { display: flex; align-items: center; background: #fdfdfd; border: 1px solid #c6c6c6; height: 32px; font-size: 16px; }
.namebox { width: 127px; padding: 0 7px; color: #666; }
.namebox input, .fbox input { flex: 1; color: #444; }
.grip { width: 3px; height: 14px; margin: auto 16px; background: repeating-linear-gradient(#aaa 0 3px, transparent 3px 5px); }
.fbtns { width: 138px; margin-left: 2px; justify-content: space-around; padding: 0 2px; }
.fx { font: italic 24px/24px "Liberation Serif", serif; color: #555; }
.fbox { flex: 1; margin-left: 2px; padding: 0 5px 0 12px; }

/* worksheet */
.work { flex: 1; display: flex; min-height: 0; }
.book { flex: 1; min-width: 0; display: flex; flex-direction: column; }
.sheet-row { flex: 1; display: flex; min-height: 0; }
.sheet { flex: 1; min-width: 0; overflow: hidden; background: #fff; border-right: 1px solid #999; border-bottom: 1px solid #999; }
.grid { table-layout: fixed; border-collapse: separate; border-spacing: 0; width: 1619px; font: 16px/22px "Noto Sans CJK SC", sans-serif; color: #000; }
.grid tr { height: 23px; }
.grid th, .grid td { height: 23px; padding: 0 3px; border: 0 solid #d4d4d4; border-width: 0 1px 1px 0; white-space: nowrap; overflow: hidden; line-height: 21px; text-align: left; font-weight: 350; }
.grid th { background: #e6e6e6; text-align: center; padding: 0; font-weight: 350; color: #222; line-height: 22px; }
.grid thead th { border-color: #999 #bbb #999 #bbb; }
.grid tbody th { border-color: #bbb #999 #bbb #bbb; }
.grid thead th.sel { border-bottom: 2px solid #217346; background: #d2d2d2; color: #217346; line-height: 21px; }
.grid tbody th.sel { border-right: 2px solid #217346; background: #d2d2d2; color: #217346; }
.corner::after { content: ""; display: block; margin: 4px 3px 0 auto; width: 0; border: 8px solid #b4b4b4; border-top-color: transparent; border-left-color: transparent; }
.grid td.num { text-align: right; }
.grid td.hd { background: #ddebf7; border-right-color: #ddebf7; border-bottom-color: #ddebf7; font-size: 18px; font-weight: 500; padding: 0 4px; line-height: 20px; }
.grid td.name { font-size: 18px; font-weight: 500; border-bottom-color: #9bc2e6; line-height: 20px; }
.grid td.name i { display: inline-block; width: 11px; height: 11px; margin: 0 3px; vertical-align: 1px; border: 1px solid #9fb1cb; border-radius: 2px; background: linear-gradient(#4b6a9b, #4b6a9b) center / 7px 1px no-repeat #eef2f8; }
.grid td.tot { background: #ddebf7; border-right-color: #ddebf7; font-size: 17px; font-weight: 700; line-height: 20px; }
.grid td.label { font-size: 18px; font-weight: 500; padding: 0 4px; }
.grid td.bb { border-bottom: 2px solid #0000cd; }
.grid td.br { border-right: 2px solid #0000cd; }
.grid td.lb { border-bottom-color: #9bc2e6; }
.grid td.hint { color: #999; font-size: 21px; text-align: center; }
.grid td.hint div { height: 21px; line-height: 16px; }
.grid td.pick { position: relative; overflow: visible; }
.pick::before { content: ""; position: absolute; inset: -2px; border: 2px solid #217346; }
.pick::after { content: ""; position: absolute; right: -3px; bottom: -3px; width: 5px; height: 5px; background: #217346; box-shadow: 0 0 0 1px #fff; }
.filter-head { display: flex; align-items: center; justify-content: space-between; height: 21px; margin-right: -4px; }
.filter-head button { width: 20px; height: 21px; background: #fff; border: 1px solid #aaa; display: grid; place-items: center; color: #666; }
.filter-head svg { width: 7px; height: 4px; }

.vscroll { width: 20px; margin: 2px 2px 0 3px; display: flex; flex-direction: column; }
.vscroll button, .hscroll button { width: 20px; height: 19px; flex: none; background: #fff; border: 1px solid #b8b8b8; display: grid; place-items: center; }
.track { flex: 1; background: #dadada; }
.track .thumb { background: #fff; border: 1px solid #aaa; height: 86%; }
.sheetbar { display: flex; height: 29px; padding-right: 25px; }
.nav { width: 103px; display: flex; gap: 23px; padding: 10px 0 0 27px; }
.st { height: 24px; margin-top: 1px; padding: 0 12px 5px 11px; line-height: 19px; border-left: 1px solid #aaa; font-size: 17px; }
.st.on { margin-top: -1px; height: 27px; padding: 0 14px 4px; background: #fff; color: #217346; border-bottom: 3px solid #217346; line-height: 20px; }
.st.on + .st { border-left: 0; }
.add { margin: 0 auto 0 0; padding: 0 33px; border-left: 1px solid #aaa; height: 24px; align-self: center; }
.hscroll { display: flex; align-items: center; width: 649px; }
.hscroll .track { height: 19px; }
.hscroll .thumb { height: 19px; width: 93%; }

/* field pane */
.pane { position: relative; width: 286px; flex: none; margin-top: 2px; padding: 0 14px 0 14px; border-left: 1px solid #bbb; display: flex; flex-direction: column; }
.pane-head { display: flex; gap: 11px; height: 51px; color: #666; }
.pane-head h2 { flex: 1; font-size: 27px; line-height: 56px; color: #217346; }
.pane-head button { height: 44px; color: #666; }
.pane-sub { display: flex; justify-content: space-between; line-height: 31px; white-space: nowrap; }
.gear { width: 51px; height: 31px; display: flex; align-items: center; justify-content: space-between; padding: 0 4px 0 10px; background: #fdfdfd; border: 1px solid #ababab; color: #666; }
.search { display: flex; align-items: center; margin-top: 14px; height: 27px; background: #fff; border: 1px solid #ababab; padding: 0 1px; }
.search input { flex: 1; padding-bottom: 3px; }
.search input::placeholder { color: #777; opacity: 1; }
.fields { flex: 1; min-height: 100px; margin-top: 19px; background: #fdfdfd; padding: 1px 2px; }
.fields label, .defer label { display: flex; align-items: center; gap: 6px; height: 25px; }
.fields label { align-items: flex-start; line-height: 17px; }
.fields .b { font-weight: 600; }
.fields a { display: block; margin-top: 8px; color: inherit; text-decoration: none; }
input[type="checkbox"] { appearance: none; width: 16px; height: 16px; margin: 0; background: #fff; border: 1px solid #ababab; display: grid; place-items: center; flex: none; }
input[type="checkbox"]:checked::after { content: ""; width: 5px; height: 9px; margin-top: -3px; border: solid #777; border-width: 0 2px 2px 0; rotate: 40deg; }
.areas-title { margin: 15px 0 0 3px; padding-top: 5px; border-top: 2px dotted #ccc; line-height: 20px; }
.areas { display: grid; grid-template-columns: 127px 1fr; margin: 18px 0 0 3px; }
.area { padding: 0 6px 5px 0; border-right: 1px solid #bbb; border-bottom: 1px solid #bbb; height: 127px; }
.area.right { border-right: 0; padding: 0 0 5px 2px; }
.area.low { border-bottom: 0; padding-bottom: 0; }
.area h3 { display: flex; align-items: center; gap: 8px; height: 28px; font-size: 15px; padding: 0 0 4px 5px; }
.area.low h3 { height: 34px; padding: 2px 0 0 6px; }
.drop { background: #fdfdfd; height: 93px; padding: 2px 1px; display: flex; flex-direction: column; gap: 2px; overflow: hidden; }
.split { flex-direction: row; }
.pills { flex: 1; display: flex; flex-direction: column; gap: 2px; }
.pill { display: flex; align-items: center; justify-content: space-between; height: 30px; flex: none; padding: 0 11px 0 8px; border: 1px solid #ababab; background: #fff; text-align: left; white-space: nowrap; }
.pill svg { color: #000; }
.pill span { display: flex; align-items: center; gap: 6px; }
.pill .sig { margin-left: 3px; }
.mini { width: 19px; margin: 0; }
.mini button { width: 19px; }
.mini .track { background: #f0f0f0; }
.mini .thumb { height: 70%; }
.defer { display: flex; justify-content: space-between; align-items: center; margin: 22px 1px 11px 3px; }
.defer label { gap: 7px; }
.defer button { width: 44px; height: 32px; background: #fdfdfd; color: #b1b1b1; }
.meter { position: absolute; right: 4px; bottom: 46px; width: 9px; height: 73px; border-radius: 5px; background: linear-gradient(#999 43%, #22c55e 43%, #7df08a); box-shadow: 0 0 4px #aaa; }

/* status bar */
.status { position: relative; display: flex; align-items: center; gap: 21px; flex: none; height: 27px; padding: 0 8px 2px 7px; background: #f1f1f1; border-top: 1px solid #c6c6c6; }
.views { display: flex; margin-left: auto; margin-right: 183px; align-self: flex-start; }
.views button { width: 41px; height: 26px; display: grid; place-items: center; }
.views .on { background: #c8c8c8; }
.pct { font-size: 13px; }
.ime { position: absolute; right: 18px; bottom: 0; height: 32px; width: 212px; display: flex; align-items: center; justify-content: space-between; padding: 0 5px 0 36px; background: #fff; border: 1px solid #b8cbe6; border-radius: 3px; color: #0a6fd8; font-size: 19px; }
.ime-logo { position: absolute; left: -10px; top: -6px; }

/* taskbar */
.taskbar { display: flex; flex: none; height: 50px; background: #d5d5d5; color: #000; }
.tk { width: 60px; display: grid; place-items: center; }
.tsearch { display: flex; align-items: center; align-self: flex-start; height: 43px; margin-top: 3px; width: 275px; background: #eee; padding-left: 8px; font-size: 16px; }
.tsearch svg + svg { margin: 0 8px 0 4px; }
.tsearch input { flex: 1; padding-bottom: 3px; }
.tsearch button { width: 70px; height: 43px; background: #1f87ff; color: #fff; font-size: 15px; }
.bars { width: 5px; height: 26px; margin: 11px 17px 0 8px; border: solid #000; border-width: 0 1px; }
.app-btn { width: 51px; margin-right: 11px; display: grid; place-items: center; border-bottom: 3px solid transparent; }
.app-btn.run { border-color: #0a78d6; }
.app-btn.two { border-image: linear-gradient(90deg, #0a78d6 80%, #5ea7e4 80%) 1; }
.app-btn.active { width: 61px; margin-left: -5px; background: #eee; }
.tray { margin-left: auto; display: flex; align-items: center; border-right: 1px solid #999; margin-right: 5px; padding-right: 25px; gap: 15px; }
.tray svg:nth-child(2) { margin: 0 27px 0 11px; }
.tray svg:nth-child(4) { margin: 0 -4px 0 -3px; }
.clock { font-size: 16px; line-height: 20px; padding-bottom: 2px; text-align: center; margin: 0 9px 0 8px; }
.play { margin-right: 15px; }
```
FILE: grid.js
```javascript
const widths = [35, 106, 70, 149, 180, 180, 180, 80, 80, 80, 80, 80, 80, 80, 80, 79];
const letters = "ABCDEFGHIJKLMNO".split("");
const people = [
  ["安俞帆", "A001", "5404", "600.4444444", "964", "61"],
  ["陈方敏", "A002", "5500", "611.1111111", "964", "141"],
  ["翟灵光", "A014", "3862", "429.1111111", "875", "11"],
  ["鼓励奖", "A003", "3583", "398.1111111", "875", "11"],
  ["郭晓亮", "A004", "3980", "442.2222222", "875", "11"],
  ["贺照璐", "A005", "5551", "616.7777778", "964", "61"],
  ["李恒前", "A006", "4631", "514.5555556", "859", "95"],
  ["李士净", "A007", "3883", "431.4444444", "875", "11"],
  ["李延伟", "A008", "4933", "548.1111111", "964", "61"],
  ["刘文超", "A009", "5631", "625.6666667", "964", "141"],
  ["马丽娜", "A010", "3846", "427.3333333", "859", "11"],
  ["孟宪鑫", "A011", "3091", "343.4444444", "875", "11"],
  ["石峻", "A012", "4854", "539.3333333", "964", "61"],
  ["杨盛楠", "A013", "5625", "625", "964", "141"],
  ["张庆华", "A015", "3301", "366.7777778", "875", "11"]
];
const td = (cls, text = "", extra = "") => `<td class="${cls}"${extra}>${text}</td>`;
const filter = (t) => `<div class="filter-head">${t}<button aria-label="筛选${t}"><svg><use href="#tri-down"/></svg></button></div>`;

function pivotCells(r) {
  if (r === 1) return td("hint bb br", "<div>将报表筛选字段拖至此处</div>", ' colspan="6"');
  if (r === 2) return td("") + td("") + td("bb").repeat(4);
  if (r === 3) return td("hd bb") + td("hd bb br") + td("hd", "值") + td("hd").repeat(2) + td("hd br");
  if (r === 4) {
    return td("hd lb", filter("员工姓名")) + td("hd lb br", filter("工号")) +
      td("hd bb", "求和项:生产数量") + td("hd bb", "平均值项:生产数量2") +
      td("hd bb", "最大值项:生产数量3") + td("hd bb br", "最小值项:生产数量4");
  }
  if (r <= 19) {
    const p = people[r - 5];
    const last = r === 19 ? " lb" : "";
    return td("name", "<i></i>" + p[0]) + td("br" + last, p[1]) + td("num" + last, p[2]) +
      td("num" + last, p[3]) + td("num" + last + (r === 10 ? " pick" : ""), p[4]) + td("num br" + last, p[5]);
  }
  if (r === 20) {
    return td("tot label bb", "总计") + td("tot bb br") + td("tot num bb", "67675") +
      td("tot num bb", "501.2962963") + td("tot num bb", "964") + td("tot num bb br", "11");
  }
  return td("").repeat(6);
}

let html = "<colgroup>" + widths.map((w) => `<col width="${w}">`).join("") + "</colgroup>";
html += '<thead><tr><th class="corner"></th>' +
  letters.map((l) => `<th${l === "E" ? ' class="sel"' : ""}>${l}</th>`).join("") + "</tr></thead><tbody>";
for (let r = 1; r <= 31; r++) {
  html += `<tr><th${r === 10 ? ' class="sel"' : ""}>${r}</th>${pivotCells(r)}${td("").repeat(9)}</tr>`;
}
document.getElementById("grid").innerHTML = html + "</tbody>";
```
